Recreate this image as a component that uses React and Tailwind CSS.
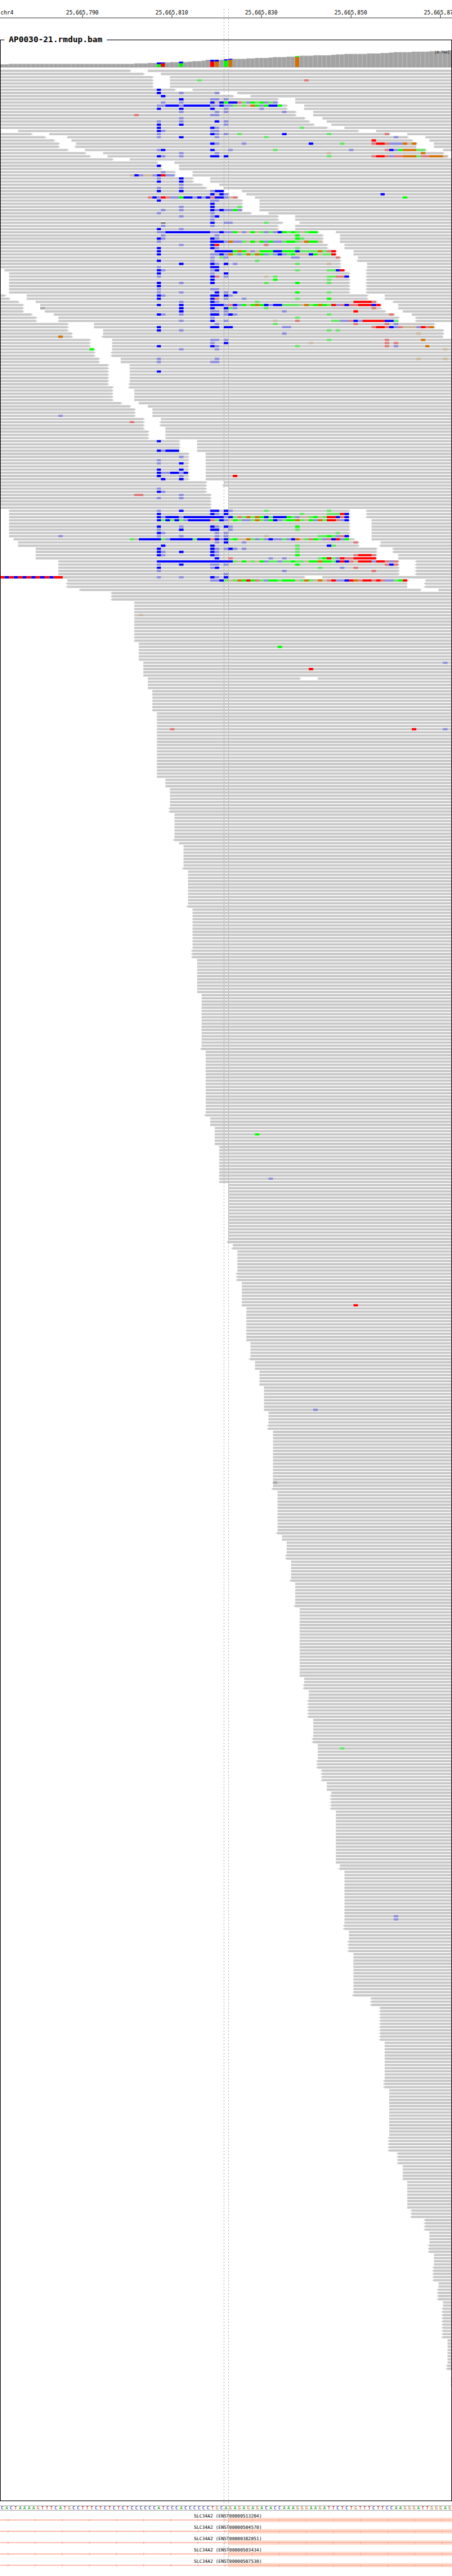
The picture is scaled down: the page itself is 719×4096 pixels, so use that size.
const BASES = 101;
const x = (col) => Math.round((col * 1000) / BASES);

const COLORS = {
  B: "#0000ff",
  b: "#8c8cdb",
  R: "#ff0000",
  r: "#df7777",
  G: "#00ff00",
  g: "#62e562",
  O: "#d17105",
  o: "#c9b7a0",
  N: "#a8a8a8",
};

// One line per row: read spans in base columns, then mismatches as "column + letters".
// "<" and ">" mark a strand arrow at that end of the read.
const PILEUP = `
0-29> 33-101
0-32> 36-101
0-34> 38-101
0-34> 38-101|44g 68r
0-34> 38-101
0-34> 38-101
0-39> 43-101|35B
0-49> 53-101|35B 40b 48b
0-52> 56-101|36B
0-62> 66-101|40B 47bb 50b
0-62> 66-101|36b 40b 47BoBGBBrgbGgGbgb
0-64> 68-101|35bbBBBbBBBBBBbbBbbgogoOGbGBBG
0-64> 68-101|35B 40B 47B 50b 58b
0-66> 70-101|40b 48b 50b 63b
0-66> 70-101|30r 47bb
0-68> 72-101|40b
0-69> 73-101|35b 40b 48B 50b
0-70> 74-101|35B 40B 50b
0-73> 77-101|35B 47Bb 67g
0-0> 4-80> 84-101|35Bb 47bb
0-7> 11-87> 91-101|35b 47Bb 50b 53g 63B 73g 86r
0-10> 15-91> 95-101|35b 40B 48b 59g 88b
0-12> 16-92> 96-101|83R
0-13> 17-93> 97-101|47Bb 54b 69B 76g 83rRRrbbbOoO
0-13> <17-93 97-101
0-15> 19-95> 99-101|35bB 47B 51b 61g 78b 86rBbGOOOgg
0-19> 23-99>|40b 48b 73o 94O
0-20> 24-100>|35Bb 40b 47BB 50B 73g 83rRRrbrrOOOgrrOOOo
0-25> 29-101
0-35> 39-101
0-36> 40-101|35B
0-36> 40-101
0-39> 43-101|36b
0-39> 43-101|29oBboobBRbb
0-43> 47-101|35b 40B
0-43> 47-101|35B 40B
0-45> 49-101|40b
0-46> 50-101|35b 40b
0-50> 54-101|35B 40B 47bBB
0-51> 55-101|47BoBb 85B
0-53> 57-101|33rBbRrbbGBBbBbBrBBbor 90G
0-54> 58-101|35B 47bb
0-54> 58-101|47B
0-54> 58-101|40b 47B 53g
0-54> 58-101|36b 40b 47BbBbbGb
0-56> 60-101|35b 47b
0-62> 66-101|40b 47bB
0-62> 66-101|47b
0-63> 67-101|36D 47B 50bb 59g
0-62> 66-101|36b 47b
0-62> 66-101|35B 40b
0-71> 75-101|35bbBBBBBBBBBBbbBbbGoboGogbgbBGgGgogGG
0-72> 76-101|36b 48b 66G
0-72> 76-101|35Bb 47Bb 66Gg
0-72> 76-101|35b 47BBBbObbgoGoGbGbbgGGgoOGGo
0-73> 77-101|40b 47BR 59r
0-73> 77-101|35B 47Bb 66g
0-75> 79-101|35B 48BBBBGOGoboGGGBBGGGBggggOgrR
0-75> 79-101|35B 47bbBbOgbgOgOGbgbBbgGoooBGoggR
0-76> 80-101|47b 49gb 65bb 75r
0-76> <80-101|35B 47b 57g
0-76> 82-101|40B 47Bb 50B 52b 66g 73o
0-76> 82-101|35b 47BB
1-77> <82-101|35Bb 47bB 66g 73ggBR
2-78> <82-101|35B 47b 50B
2-78> <82-101|35b 47Br 50b 59o 61g 73ggrrB
2-78> <82-101|47B 61G 73g
2-78> <82-101|35B 40b 47B 59g 66G 73g
2-78> <82-101|35B
2-78> <82-101|35b 47bb
2-78> <82-101|35b 40b 48B 50b 52B 66G 73g
0-1> 6-82> 86-101|35Bb 47BB 50Bb
0-2> 6-82> 86-101|35B 47Br 50b 54b 66g 73G
0-4> 8-84> <88-101|40b 47Bb 57g 79RRRRr
0-5> 9-85> 89-101|35B 40B 47BBBbrBbGoGOGBbBBggggoOgGOGgRbrBrrRRRBR
0-5> 9-85> 89-101|9N 40B 47B 50Bgb 59g 83r
0-5> 10-86> 90-101|40B 47bb 50b 63b 79R
0-7> 12-88> 92-101|35Bb 40b 47BB 50bBb 73g 87r
0-8> 13-89> <93-101|47b 66g
0-8> 13-89> <93-101|40b 47B 50b 61o 66r 74ggbbrBbRRRRRBBg
0-15> 21-97>|48b 61g 79r 86r 88b
0-15> 21-97>|35B 47BB 50BB 63bb 83rRRrBbrooobRrO
0-15> 23-99>|35B 40b 73g 75g
0-16> 23-99>|63b 93o
0-16> <23-99|13O
0-20> 25-101|47bb 50b 73g 86r 94O
0-20> 25-101|47b 50B 69o 86r 88r
0-20> 25-101|35B 47Bb 66g 86r 88b 95O
0-21> 25-101|20G 40b 48b 99o
0-21> <25-101
0-21> <25-101
0-22> 27-101|35b 48b 93o 99o
0-22> 27-101|35b 47bb
0-24> 29-101
0-24> 29-101
0-24> 29-101|35B
0-24> 29-101
0-24> 29-101
0-24> 29-101
0-24> <29-101
0-25> <29-101
0-25> 30-101
0-25> 30-101
0-25> 30-101
0-25> 30-101
0-27> 31-101
0-29> 33-101
0-30> 34-101
0-30> 34-101
0-30> 34-101|13b
0-32> 36-101
0-32> <36-101|29r
0-32> <36-101
0-32> 37-101
0-33> 37-101
0-33> 37-101
0-33> 37-101
0-40> 44-101|35B
0-40> 44-101
0-40> 44-101
0-40> 44-101|35BbBBB
0-42> 46-101
0-42> 46-101|40b
0-42> 46-101|35b
0-42> 46-101|35b 40B
0-42> 46-101
0-42> 46-101|35B 40B
0-42> 46-101|35BbbBBbB
0-42> 46-101|35B 40b 52R
0-42> 46-101|36B 40B
0-46> 50-101
0-46> <50-101
0-46> 51-101|35b
0-46> 51-101|35Bb
0-47> 51-101|30rr 40b
0-47> 51-101|35b 40b
0-47> 51-101
0-47> 51-101
0-47> 51-101
2-78> <82-101|35b 40B 47BB 50Bb 59g 73g
2-78> <82-101|35B 47Bb 50B 67g 73gggRB
2-78> <82-101|35BbBBBbBBBBBBBBBbBgrgOgOGBgBBBGgboogGogRRBrB
2-78> 83-101|35BgBgBgbBBBBBrgBboGgbbgOgbGBbgGGOgoGbOgRRrbB
2-78> 83-101
2-78> 83-101|35B 40b 47Bb 50Bb 66G
2-78> 83-101|35b 40B 47BB 51b 66g
2-78> 83-101|35Bb 48b 50b 75g
2-78> 83-101|13b 35b 40b 48b 50b 59o 71ggGgbrB
3-79> 83-101|29goBBBBBgbBBBBBgBBBrBbBgGooOgbgbBbbgbBOogrGgbrBRbG
4-80> 85-101|48b 50B 54b 79r
4-80> <85-101|36B 47B 66g 73Bg
8-84> <88-101|35B 47Bb 50bBb 54b 66g
8-84> <88-101|35Bb 40B 47Bb 66g
8-84> 89-101|35Bb 47Bb 66G 79rRRRr
8-84> 89-101|48B 51r 60b 63b 71gGRgbRrrRRRRR
13-89> <93-101|35BBBBBBBBBBBBBBBBBgoGogoGbggbggGggoGGOGGgBRBroRRRbRRrbr
13-89> <93-101|35b 40B 47bb 50b 66G 86rBr
13-89> <93-101|35B 47bB 71g 76b 79r
13-89> <93-101|35b 63b 83r
13-89> <93-101|50b
0-68> 72-101|0RBRBRBRBRBRBRR 35b 40b 47Bb 50B
15-91> 95-101|47bbBgogOGRGrgbGGgGGGogOgoOorRbbBROrRRrRrbbgGR
<15-91 <95-101
<15-91 <95-101
<18-94 98-101
<25-101
<25-101
<25-101`;

// [first column, rows, trailing rows that carry a strand arrow]
const STAIRS = [
  [30, 13, 0], [31, 6, 0], [32, 5, 0], [33, 4, 0], [34, 7, 0], [35, 21, 0],
  [37, 3, 0], [38, 8, 2], [39, 9, 1], [40, 1, 0], [41, 8, 1], [42, 12, 1],
  [43, 16, 3], [44, 11, 0], [45, 18, 1], [46, 21, 1], [47, 3, 0], [48, 6, 0],
  [49, 12, 0], [51, 19, 1], [52, 2, 1], [53, 10, 3], [54, 8, 0], [55, 11, 0],
  [56, 6, 1], [57, 3, 0], [58, 5, 0], [59, 8, 0], [60, 6, 2], [61, 19, 1],
  [62, 14, 1], [63, 2, 0], [64, 6, 2], [65, 7, 1], [66, 8, 1], [67, 22, 0],
  [68, 4, 2], [69, 9, 6], [70, 8, 2], [71, 8, 3], [72, 4, 4], [73, 3, 0],
  [74, 6, 5], [75, 17, 0], [76, 2, 1], [77, 19, 2], [78, 7, 4], [79, 14, 1],
  [83, 3, 3], [85, 11, 11], [86, 15, 3], [87, 20, 5], [89, 4, 4], [90, 5, 0],
  [91, 9, 0], [92, 3, 3], [95, 4, 4], [96, 7, 3], [97, 9, 5], [98, 6, 4],
  [99, 12, 10], [100, 10, 2], [101, 5, 3],
];

const STAIR_MISMATCHES = {
  172: "31o",
  182: "62G",
  187: "99b",
  189: "69R",
  208: "38r 92R 99b",
  336: "57G",
  350: "60b",
  390: "79R",
  423: "70b",
  446: "61N",
  530: "76g",
  583: "88b",
  584: "88b",
};

function buildRows() {
  const rows = PILEUP.trim().split("\n");
  STAIRS.forEach(([col, count, arrows]) => {
    for (let i = 0; i < count; i++) {
      const n = rows.length;
      const head = i >= count - arrows ? "<" : "";
      const span = n === 192 ? "33-67> 71-101" : `${head}${col}-101`;
      rows.push(`${span}|${STAIR_MISMATCHES[n] || ""}`);
    }
  });
  return rows;
}

const box = (x1, y1, x2, y2) => `M${x1} ${y1}H${x2}V${y2}H${x1}Z`;

function buildPaths() {
  const reads = [];
  const tiles = {};
  const gaps = [];
  buildRows().forEach((row, i) => {
    const y = 154 + i * 7;
    const [spans, mismatches = ""] = row.split("|");
    spans.split(" ").forEach((span) => {
      const [a, b] = span.split("-");
      const x1 = x(parseInt(a.replace("<", ""), 10));
      const x2 = x(parseInt(b, 10));
      reads.push(box(x1, y, x2, y + 5));
      if (a.startsWith("<")) {
        reads.push(box(x1 - 2, y + 1, x1, y + 4), box(x1 - 4, y + 2, x1 - 2, y + 3));
      }
      if (b.endsWith(">")) {
        reads.push(box(x2, y + 1, x2 + 2, y + 4), box(x2 + 2, y + 2, x2 + 4, y + 3));
      }
    });
    mismatches.split(" ").filter(Boolean).forEach((run) => {
      const start = parseInt(run, 10);
      const letters = run.replace(/^\d+/, "");
      for (let s = 0; s < letters.length; ) {
        let e = s + 1;
        while (letters[e] === letters[s]) e++;
        const x1 = x(start + s);
        const x2 = x(start + e);
        if (letters[s] === "D") gaps.push([x1, x2, y]);
        else (tiles[letters[s]] ||= []).push(box(x1, y, x2, y + 5));
        s = e;
      }
    });
  });
  return { reads: reads.join(""), tiles, gaps };
}

const PATHS = buildPaths();

// [columns, y of the bar top]
const COVERAGE = [
  [2, 142], [28, 141], [3, 140], [2, 139], [3, 138], [2, 137], [1, 136], [1, 137],
  [1, 136], [2, 135], [1, 134], [4, 132], [1, 131], [4, 130], [2, 129], [3, 128],
  [1, 127], [3, 126], [2, 125], [1, 124], [3, 123], [4, 122], [1, 121], [2, 120],
  [5, 119], [3, 118], [2, 117], [1, 116], [4, 115], [4, 114], [4, 113], [1, 111],
].flatMap(([count, top]) => Array(count).fill(top));

// [column, top, split, lower colour, upper colour]
const VARIANTS = [
  [35, 138, 142, "G", "B"],
  [36, 138, 140, "R", "B"],
  [40, 136, 140, "G", "B"],
  [47, 132, 136, "R", "B"],
  [48, 132, 136, "O", "B"],
  [50, 131, 134, "G", "B"],
  [51, 130, 132, "O", "B"],
  [66, 124, 126, "O", "G"],
];

const TICKS = [
  [182, "25,665,790"],
  [380, "25,665,810"],
  [578, "25,665,830"],
  [776, "25,665,850"],
  [974, "25,665,870"],
];

const SEQUENCE =
  "CACTAAAAGTTTCATGCCTTTCTCTCTCTCCCCCCATCCCACCCCCCTGCAGAGAGAGACACCAAAGGGAAGATTCTCTGTTTCTTCCAAGGGATTGGGAG";

const BASE_CLASS = {
  A: "text-[#009600]",
  C: "text-[#000096]",
  G: "text-[#a86414]",
  T: "text-[#b40000]",
};

const TRANSCRIPTS = [
  "ENST00000513204",
  "ENST00000504570",
  "ENST00000382051",
  "ENST00000503434",
  "ENST00000507530",
];

function Ruler() {
  return (
    <header className="h-[54px]">
      <svg viewBox="0 0 1000 75" className="block w-full" fontSize="12">
        <text x="1" y="32">chr4</text>
        {TICKS.map(([pos, label]) => (
          <g key={label}>
            <text x={pos} y="32" textAnchor="middle">{label}</text>
            <rect x={pos} y="32" width="1" height="7" />
          </g>
        ))}
        <rect y="39" width="1000" height="1" />
      </svg>
    </header>
  );
}

function Coverage() {
  return (
    <g>
      {COVERAGE.map((top, i) => (
        <g key={i}>
          <rect x={x(i)} y={top} width={x(i + 1) - x(i)} height={148 - top} fill="#b0b0b0" />
          <rect x={x(i)} y={top + 1} width={x(i + 1) - x(i) - 2} height={147 - top} fill="#a3a3a3" />
        </g>
      ))}
      {VARIANTS.map(([col, top, split, lower, upper]) => (
        <g key={col}>
          <rect x={x(col)} y={top} width={9} height={split - top} fill={COLORS[upper]} />
          <rect x={x(col)} y={split} width={9} height={148 - split} fill={COLORS[lower]} />
        </g>
      ))}
      <rect x="0" y="148" width="1000" height="1" fill="#7f7f7f" />
      <text x="995" y="118" textAnchor="end" fontSize="8">[0-766]</text>
    </g>
  );
}

function Reads() {
  return (
    <g>
      <path d={PATHS.reads} fill="#c8c8c8" />
      {Object.entries(PATHS.tiles).map(([letter, boxes]) => (
        <path key={letter} d={boxes.join("")} fill={COLORS[letter]} />
      ))}
      {PATHS.gaps.map(([x1, x2, y]) => (
        <g key={y}>
          <rect x={x1} y={y} width={x2 - x1} height="5" fill="#ffffff" />
          <rect x={x1} y={y + 2} width={x2 - x1} height="2" />
        </g>
      ))}
    </g>
  );
}

function AlignmentTrack() {
  return (
    <section>
      <div className="flex h-[18px] items-end">
        <span className="h-[9px] w-[7px] border-t border-l border-black" />
        <h1 className="px-[7px] text-[13px] leading-[18px] font-bold">AP0030-21.rmdup.bam</h1>
        <span className="h-[9px] flex-1 border-t border-r border-black" />
      </div>
      <div className="border-x border-b border-black">
        <svg viewBox="1.4 100 997.2 5430" className="block w-full">
          <Coverage />
          <Reads />
        </svg>
      </div>
    </section>
  );
}

function Sequence() {
  return (
    <section className="mt-[7px] grid h-[8px] grid-cols-[repeat(101,minmax(0,1fr))] border-y border-[#a8a8a8] text-center text-[7px] leading-[6px]">
      {SEQUENCE.split("").map((base, i) => (
        <span key={i} className={BASE_CLASS[base]}>{base}</span>
      ))}
    </section>
  );
}

function Transcript({ id, height }) {
  return (
    <svg viewBox={`0 0 1000 ${height}`} className="block w-full">
      <rect x="505" y="13" width="495" height="10" fill="#ffdccd" />
      <rect y="17" width="1000" height="2" fill="#ffab9b" />
      {Array.from({ length: 17 }, (_, i) => (
        <path key={i} d={`M${17 + i * 60} 14.500l3 3.500l-3 3.500z`} fill="#ffab9b" />
      ))}
      <text x="429" y="12" fontSize="10">SLC34A2 ({id})</text>
    </svg>
  );
}

function CenterGuides() {
  return (
    <svg
      viewBox="0 0 1000 5697"
      preserveAspectRatio="none"
      className="pointer-events-none absolute inset-0 h-full w-full"
      stroke="#969696"
      strokeDasharray="3 4"
    >
      <path d="M495.500 20V5677" />
      <path d="M505.500 20V5677" />
    </svg>
  );
}

export default function App() {
  return (
    <main className="relative w-full overflow-hidden bg-white pb-[12px] font-['DejaVu_Sans_Mono',monospace] text-black">
      <Ruler />
      <AlignmentTrack />
      <Sequence />
      <section className="mt-[2px]">
        {TRANSCRIPTS.map((id, i) => (
          <Transcript key={id} id={id} height={i === TRANSCRIPTS.length - 1 ? 22 : 25} />
        ))}
      </section>
      <CenterGuides />
    </main>
  );
}
